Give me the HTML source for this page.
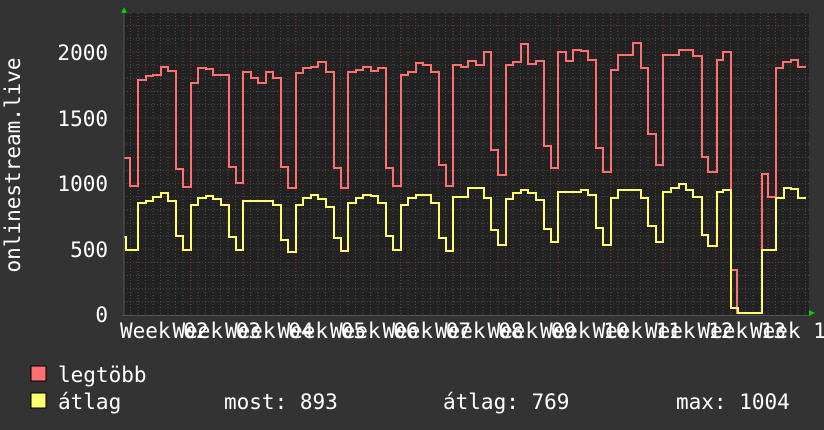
<!DOCTYPE html>
<html><head><meta charset="utf-8"><style>
html,body{margin:0;padding:0;background:#333;}
svg{display:block;}
text{font-family:"DejaVu Sans Mono","Liberation Mono",monospace;font-size:21px;fill:#fff;}
</style></head><body>
<svg id="g" width="824" height="430" xmlns="http://www.w3.org/2000/svg">
<rect width="824" height="430" fill="#333"/>
<rect x="124" y="13" width="685" height="302" fill="#222"/>
<g id="grid"></g>
<path id="red" fill="none" stroke="#ff7070" stroke-width="2"/>
<path id="yel" fill="none" stroke="#ffff70" stroke-width="2"/>
<line x1="124" y1="10" x2="124" y2="316" stroke="#555" stroke-width="1"/>
<line x1="122" y1="315.5" x2="810" y2="315.5" stroke="#555" stroke-width="1"/>
<polygon points="121,13 127,13 124,7" fill="#0c0"/>
<polygon points="809,310 809,316 815,313" fill="#0c0"/>
<text x="108" y="60" text-anchor="end">2000</text>
<text x="108" y="126" text-anchor="end">1500</text>
<text x="108" y="191" text-anchor="end">1000</text>
<text x="108" y="257" text-anchor="end">500</text>
<text x="108" y="322" text-anchor="end">0</text>
<text transform="translate(20,165) rotate(-90)" text-anchor="middle">onlinestream.live</text>
<g id="xl"></g>
<rect x="31" y="366" width="15" height="15" fill="#ff7070" stroke="#000" stroke-width="1"/>
<rect x="31" y="393" width="15" height="15" fill="#ffff70" stroke="#000" stroke-width="1"/>
<text x="58" y="382">legtöbb</text>
<text x="58" y="409">átlag</text>
<text x="224" y="409">most: 893</text>
<text x="443" y="409">átlag: 769</text>
<text x="676" y="409">max: 1004</text>
</svg>
<script>
var g=document.getElementById('grid'),s='';
for(var x=130.5;x<809;x+=7.5){s+='<line x1="'+x+'" y1="13" x2="'+x+'" y2="315" stroke="#4a4a4a" stroke-dasharray="1,2"/>';}
for(var v=100;v<=2200;v+=100){var y=315-v*0.1315;s+='<line x1="124" y1="'+y+'" x2="809" y2="'+y+'" stroke="'+(v%500?'#4a4a4a':'#6a3030')+'" stroke-dasharray="1,2"/>';}
for(var i=0;i<13;i++){var x=138.5+52.5*i;s+='<line x1="'+x+'" y1="13" x2="'+x+'" y2="315" stroke="#6a3030" stroke-dasharray="1,2"/>';}
g.innerHTML=s;
var R=[124,158,130,186,138,80,146,76,153,75,161,67,168,71,176,169,183,187,191,83,198,68,206,69,213,75,221,75,229,167,236,183,243,72,251,78,258,83,266,72,273,78,281,167,288,188,296,73,303,68,311,67,318,62,326,72,334,168,341,188,348,72,356,70,363,67,371,71,378,68,386,168,393,186,401,75,408,72,416,63,423,65,431,72,439,165,446,186,453,65,461,67,468,61,476,65,484,52,491,150,498,175,506,65,513,62,521,44,528,64,536,61,544,146,551,168,558,52,566,61,573,50,581,51,588,60,596,148,603,172,611,70,618,55,626,55,633,43,641,68,648,134,656,165,663,55,679,50,693,56,702,157,708,172,717,60,723,52,731,270,737,313,762,174,768,197,776,68,783,62,791,60,798,67,806];
var Y=[124,237,126,250,138,203,146,201,153,197,161,193,168,201,176,236,183,250,191,205,198,198,206,196,213,199,221,205,229,237,236,250,243,201,251,201,258,201,266,201,273,205,281,240,288,252,296,205,303,198,311,195,318,199,326,207,334,238,341,251,348,203,356,198,363,195,371,196,378,203,386,236,393,250,401,205,408,198,416,195,423,195,431,203,439,238,446,251,453,197,461,197,468,188,476,188,484,198,491,230,498,245,506,199,513,193,521,190,528,193,536,200,544,229,551,242,558,192,566,192,573,192,581,190,588,195,596,228,603,245,611,198,618,190,626,190,633,190,641,198,648,226,656,242,663,192,671,188,679,184,686,190,693,197,702,235,708,246,717,192,723,190,731,308,738,313,762,250,776,198,784,188,791,189,798,198,806];
function P(a){var d='M'+a[0]+','+a[1];for(var i=2;i<a.length;i+=2){d+=' H'+a[i];if(i+1<a.length)d+=' V'+a[i+1];}return d;}
document.getElementById('red').setAttribute('d',P(R));
document.getElementById('yel').setAttribute('d',P(Y));
var xl='';for(var i=0;i<13;i++){var n=i+2;xl+='<text x="'+(120+52.5*i)+'" y="338" xml:space="preserve">Week '+(n<10?'0'+n:n)+'</text>';}
document.getElementById('xl').innerHTML=xl;
</script>
</body></html>
